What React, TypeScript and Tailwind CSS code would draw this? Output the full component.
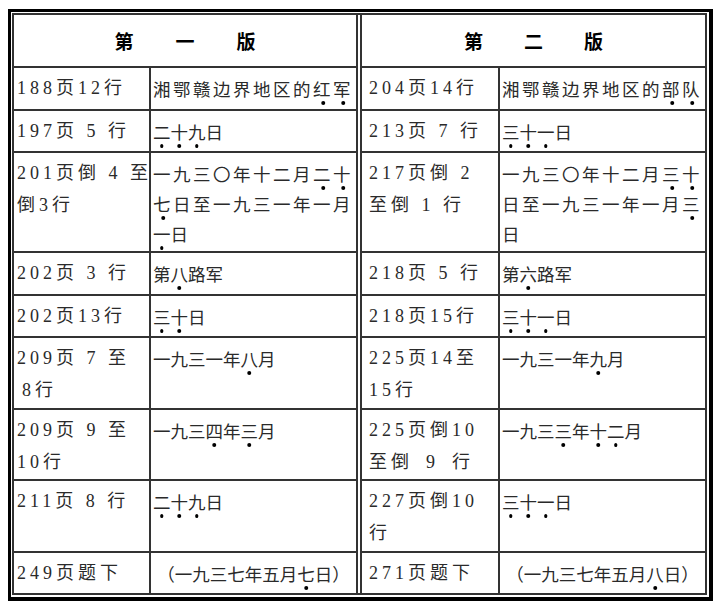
import type { ReactNode } from "react"

function Dot({ children }: { children: ReactNode }) {
  return (
    <span className="relative">
      {children}
      <span className="absolute left-1/2 top-[calc(100%+1px)] size-[3.5px] -translate-x-1/2 rounded-full bg-black" />
    </span>
  )
}

type Row = {
  h: string
  a: ReactNode
  b: ReactNode
  c: ReactNode
  d: ReactNode
  center?: boolean
}

const rows: Row[] = [
  {
    h: "h-[43px]",
    a: "188页12行",
    b: (
      <span className="tracking-[2.5px]">
        湘鄂赣边界地区的<Dot>红</Dot><Dot>军</Dot>
      </span>
    ),
    c: "204页14行",
    d: (
      <span className="tracking-[2.5px]">
        湘鄂赣边界地区的<Dot>部</Dot><Dot>队</Dot>
      </span>
    ),
  },
  {
    h: "h-[42px]",
    a: "197页 5 行",
    b: (
      <>
        <Dot>二</Dot><Dot>十</Dot><Dot>九</Dot>日
      </>
    ),
    c: "213页 7 行",
    d: (
      <>
        <Dot>三</Dot><Dot>十</Dot><Dot>一</Dot>日
      </>
    ),
  },
  {
    h: "h-[100px]",
    a: (
      <>
        201页倒 4 至<br />倒3行
      </>
    ),
    b: (
      <>
        <span className="tracking-[2.5px]">
          一九三〇年十二月<Dot>二</Dot><Dot>十</Dot>
        </span>
        <br />
        <span className="tracking-[2.5px]">
          <Dot>七</Dot>日至一九三一年一月
        </span>
        <br />
        <Dot>一</Dot>日
      </>
    ),
    c: (
      <>
        217页倒 2<br />至倒 1 行
      </>
    ),
    d: (
      <>
        <span className="tracking-[2.5px]">
          一九三〇年十二月<Dot>三</Dot><Dot>十</Dot>
        </span>
        <br />
        <span className="tracking-[2.5px]">
          日至一九三一年一月<Dot>三</Dot>
        </span>
        <br />
        日
      </>
    ),
  },
  {
    h: "h-[43px]",
    a: "202页 3 行",
    b: (
      <>
        第<Dot>八</Dot>路军
      </>
    ),
    c: "218页 5 行",
    d: (
      <>
        第<Dot>六</Dot>路军
      </>
    ),
  },
  {
    h: "h-[42px]",
    a: "202页13行",
    b: (
      <>
        <Dot>三</Dot><Dot>十</Dot>日
      </>
    ),
    c: "218页15行",
    d: (
      <>
        <Dot>三</Dot><Dot>十</Dot><Dot>一</Dot>日
      </>
    ),
  },
  {
    h: "h-[72px]",
    a: (
      <>
        209页 7 至<br />
        <span className="pl-[5px]">8行</span>
      </>
    ),
    b: (
      <>
        一九三一年<Dot>八</Dot>月
      </>
    ),
    c: (
      <>
        225页14至<br />15行
      </>
    ),
    d: (
      <>
        一九三一年<Dot>九</Dot>月
      </>
    ),
  },
  {
    h: "h-[71px]",
    a: (
      <>
        209页 9 至<br />10行
      </>
    ),
    b: (
      <>
        一九三<Dot>四</Dot>年<Dot>三</Dot>月
      </>
    ),
    c: (
      <>
        225页倒10<br />至倒{"\u2002"}9{"\u2002"}行
      </>
    ),
    d: (
      <>
        一九三<Dot>三</Dot>年<Dot>十</Dot><Dot>二</Dot>月
      </>
    ),
  },
  {
    h: "h-[72px]",
    a: "211页 8 行",
    b: (
      <>
        <Dot>二</Dot><Dot>十</Dot><Dot>九</Dot>日
      </>
    ),
    c: (
      <>
        227页倒10<br />行
      </>
    ),
    d: (
      <>
        <Dot>三</Dot><Dot>十</Dot><Dot>一</Dot>日
      </>
    ),
  },
  {
    h: "h-[41px]",
    a: "249页题下",
    b: (
      <>
        （一九三七年五月<Dot>七</Dot>日）
      </>
    ),
    c: "271页题下",
    d: (
      <>
        （一九三七年五月<Dot>八</Dot>日）
      </>
    ),
    center: true,
  },
]

const line = "border-2 border-[#333]"
const pageCell =
  "align-top pt-[4px] text-[18px] leading-[32px] tracking-[4px] whitespace-nowrap"
const textCell = "align-top pt-[7px] text-[17.5px] leading-[30px] whitespace-nowrap"
const middle = "border-r-[6px] [border-right-style:double]"

export default function App() {
  return (
    <div className="h-[611px] w-[720px] bg-white pl-[8px] pt-[9px] font-['Liberation_Serif','Noto_Sans_CJK_SC',serif] text-[#2a2a2a]">
      <div className="w-[705px] border-[3px] border-r-[4px] border-b-[4px] border-black bg-white pb-[2px] pl-px pr-[2px] pt-px">
        <div className="border-2 border-[#333]">
          <table className="w-full table-fixed border-collapse border-hidden">
            <colgroup>
              <col className="w-[136px]" />
              <col className="w-[209px]" />
              <col className="w-[140px]" />
              <col className="w-[206px]" />
            </colgroup>
            <thead>
              <tr className="h-[52px]">
                <th colSpan={2} className={`${line} ${middle} pt-[2px] align-middle`}>
                  <div className="flex justify-center gap-[42px] font-['Noto_Sans_CJK_SC',sans-serif] text-[19px] font-bold text-black">
                    <span>第</span>
                    <span>一</span>
                    <span>版</span>
                  </div>
                </th>
                <th colSpan={2} className={`${line} pt-[2px] align-middle`}>
                  <div className="flex justify-center gap-[41px] font-['Noto_Sans_CJK_SC',sans-serif] text-[19px] font-bold text-black">
                    <span>第</span>
                    <span>二</span>
                    <span>版</span>
                  </div>
                </th>
              </tr>
            </thead>
            <tbody>
              {rows.map((r, i) => (
                <tr key={i} className={r.h}>
                  <td className={`${line} ${pageCell} pl-[3px]`}>{r.a}</td>
                  <td
                    className={`${line} ${middle} ${textCell} ${r.center ? "text-center" : "pl-[2px]"}`}
                  >
                    {r.b}
                  </td>
                  <td className={`${line} ${pageCell} pl-[7px]`}>{r.c}</td>
                  <td className={`${line} ${textCell} ${r.center ? "text-center" : "pl-[2px]"}`}>
                    {r.d}
                  </td>
                </tr>
              ))}
            </tbody>
          </table>
        </div>
      </div>
    </div>
  )
}
